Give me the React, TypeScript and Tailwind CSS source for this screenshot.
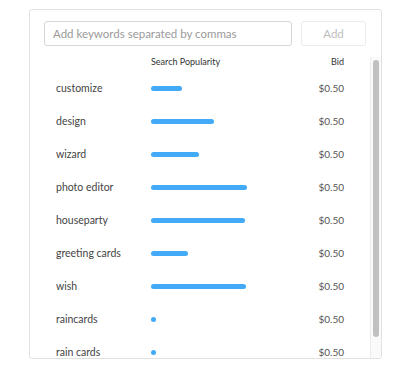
const keywords = [
  { term: 'customize', pop: 31 },
  { term: 'design', pop: 63 },
  { term: 'wizard', pop: 48 },
  { term: 'photo editor', pop: 96 },
  { term: 'houseparty', pop: 94 },
  { term: 'greeting cards', pop: 37 },
  { term: 'wish', pop: 95 },
  { term: 'raincards', pop: 5 },
  { term: 'rain cards', pop: 5 },
]

export default function App() {
  return (
    <div className="h-[372px] w-[400px] bg-white pl-[29px] pt-[9px] font-['Lato','Open_Sans',sans-serif]">
      <div className="flex h-[350px] w-[353px] flex-col overflow-hidden rounded-[3px] border border-[#e2e2e2] bg-white">
        <div className="flex gap-[9px] pl-[14px] pt-[11px]">
          <input
            type="text"
            placeholder="Add keywords separated by commas"
            className="h-[25px] w-[248px] rounded-[3px] border border-[#d6d6d6] px-[8px] text-[11.5px] text-[#333] placeholder:text-[#9a9a9a] focus:outline-none"
          />
          <button className="h-[25px] w-[65px] rounded-[3px] border border-[#ebebeb] text-[11.5px] text-[#bdbdbd]">
            Add
          </button>
        </div>

        <div className="mt-[9px] flex min-h-0 flex-1">
          <div className="min-w-0 flex-1 overflow-hidden pl-[26px] pr-[26px]">
            <div className="mb-[3px] flex h-[14px] items-center text-[9px] text-[#333]">
              <span className="w-[95px]" />
              <span className="flex-1">Search Popularity</span>
              <span>Bid</span>
            </div>
            {keywords.map((k) => (
              <div key={k.term} className="flex h-[33px] items-center">
                <span className="w-[95px] text-[10.5px] text-[#444]">{k.term}</span>
                <div className="flex-1">
                  <div
                    className="h-[5px] rounded-full bg-[#42aaf6]"
                    style={{ width: k.pop }}
                  />
                </div>
                <span className="text-[10px] text-[#555]">$0.50</span>
              </div>
            ))}
          </div>
          <div className="mt-[2px] w-[11px] shrink-0 border-l border-[#ececec] bg-[#fafafa] px-[2px] pt-[3px]">
            <div className="h-[277px] w-[6px] rounded-full bg-[#c1c1c1]" />
          </div>
        </div>
      </div>
    </div>
  )
}
